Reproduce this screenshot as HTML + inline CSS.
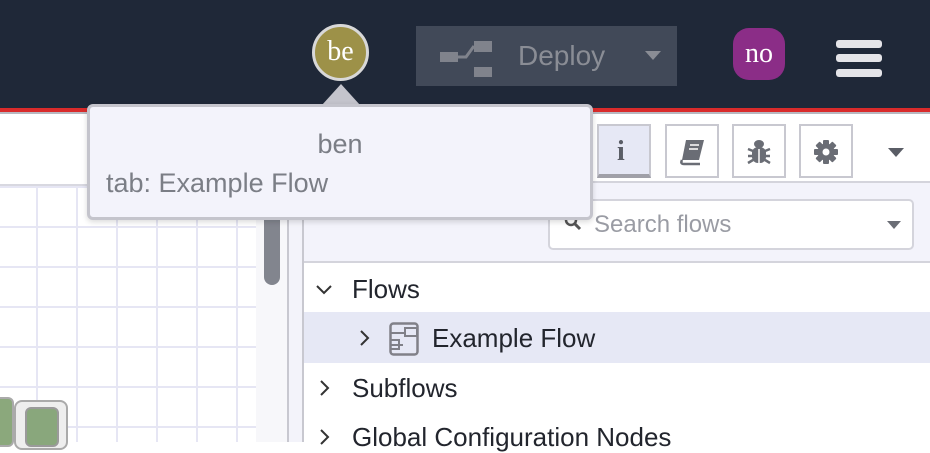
<!DOCTYPE html>
<html><head><style>
body{margin:0;width:930px;height:442px;overflow:hidden;position:relative;font-family:"Liberation Sans",sans-serif;background:#fff}
div{position:absolute;box-sizing:border-box}
.btn{top:124px;width:54px;height:54px;border:2px solid #c8c8d0;background:#fff}
.t{font-size:26px;color:#22252d}
</style></head><body>
<div style="left:0;top:0;width:930px;height:108px;background:#1f2838"></div>
<div style="left:0;top:108px;width:930px;height:4px;background:#d92b2b"></div>
<div style="left:0;top:112px;width:930px;height:2px;background:#b8b8c0"></div>
<div style="left:312px;top:24px;width:57px;height:57px;border-radius:50%;background:#9d9148;border:3px solid #d8d8d8;color:#fff;font-size:28px;text-align:center;line-height:50px;font-family:'Liberation Serif',serif">be</div>
<div style="left:416px;top:26px;width:261px;height:60px;background:#414958"></div>
<svg style="position:absolute;left:436px;top:40px" width="60" height="40"><rect x="4" y="12" width="18" height="10" fill="#80838c"/><path d="M20 17 L30 17 L38 6" stroke="#80838c" stroke-width="3" fill="none"/><rect x="38" y="1" width="18" height="11" fill="#80838c"/><rect x="38" y="27" width="18" height="10" fill="#80838c"/></svg>
<div style="left:518px;top:40px;font-size:28px;color:#8a8d95">Deploy</div>
<div style="left:645px;top:51px;width:0;height:0;border-left:8px solid transparent;border-right:8px solid transparent;border-top:9px solid #8a8d95"></div>
<div style="left:733px;top:28px;width:52px;height:52px;border-radius:16px;background:#8b2d87;color:#fff;font-size:28px;text-align:center;line-height:52px;font-family:'Liberation Serif',serif">no</div>
<div style="left:836px;top:40px;width:46px;height:8px;border-radius:3px;background:#e4e4e8"></div>
<div style="left:836px;top:54px;width:46px;height:8px;border-radius:3px;background:#e4e4e8"></div>
<div style="left:836px;top:69px;width:46px;height:8px;border-radius:3px;background:#e4e4e8"></div>
<div style="left:0;top:184px;width:256px;height:2px;background:#d8d8e0"></div>
<div style="left:0;top:186px;width:256px;height:256px;background-color:#fff;background-image:linear-gradient(to right,#e6e6f4 2px,transparent 2px),linear-gradient(to bottom,#e6e6f4 2px,transparent 2px);background-size:40px 40px;background-position:36px 40px"></div>
<div style="left:256px;top:114px;width:31px;height:328px;background:#f7f7fa"></div>
<div style="left:264px;top:200px;width:16px;height:85px;border-radius:8px;background:#82858e"></div>
<div style="left:287px;top:114px;width:2px;height:328px;background:#c8c8d0"></div>
<div style="left:289px;top:114px;width:13px;height:328px;background:#f3f3fa"></div>
<div style="left:302px;top:114px;width:2px;height:328px;background:#c8c8d0"></div>
<div style="left:-10px;top:397px;width:24px;height:50px;border-radius:6px;background:#8ba87c;border:2px solid #aaa"></div>
<div style="left:14px;top:400px;width:54px;height:50px;border-radius:8px;background:#eee;border:2px solid #aaa"></div>
<div style="left:25px;top:407px;width:34px;height:40px;border-radius:6px;background:#89a77c;border:2px solid #9a9a9a"></div>
<div style="left:304px;top:114px;width:626px;height:70px;background:#fff"></div>
<div style="left:304px;top:181px;width:626px;height:82px;background:#f3f3fb;border-top:2px solid #d4d4dc;border-bottom:2px solid #d4d4dc"></div>
<div class="btn" style="left:597px;background:#e6e8f5;border-bottom:4px solid #a0a0a8"></div>
<div style="left:617px;top:136px;font-size:28px;font-weight:bold;color:#5a5d66;font-family:'Liberation Serif',serif">i</div>
<div class="btn" style="left:665px"></div>
<svg style="position:absolute;left:678px;top:138px" width="30" height="28"><path d="M8 2 H26 L21 22 H4 Z" fill="#6a6d75"/><path d="M4 22 Q2 26 6 26 H22" stroke="#6a6d75" stroke-width="2.5" fill="none"/><path d="M12 7 H21 M11 11 H20" stroke="#fff" stroke-width="1.5"/></svg>
<div class="btn" style="left:732px"></div>
<svg style="position:absolute;left:745px;top:137px" width="28" height="30"><ellipse cx="14" cy="7" rx="5" ry="4" fill="#6a6d75"/><rect x="7" y="10" width="14" height="16" rx="6" fill="#6a6d75"/><path d="M3 12 L8 14 M3 19 H8 M3 26 L8 23 M25 12 L20 14 M25 19 H20 M25 26 L20 23" stroke="#6a6d75" stroke-width="2.5"/><path d="M14 12 V26" stroke="#fff" stroke-width="1.5"/></svg>
<div class="btn" style="left:799px"></div>
<svg style="position:absolute;left:813px;top:139px" width="26" height="26"><g fill="#6a6d75"><circle cx="13" cy="13" r="8.5"/><rect x="10" y="1" width="6" height="24" rx="1"/><rect x="1" y="10" width="24" height="6" rx="1"/><rect x="10" y="1" width="6" height="24" rx="1" transform="rotate(45 13 13)"/><rect x="10" y="1" width="6" height="24" rx="1" transform="rotate(-45 13 13)"/></g><circle cx="13" cy="13" r="3.5" fill="#fff"/></svg>
<div style="left:888px;top:148px;width:0;height:0;border-left:8px solid transparent;border-right:8px solid transparent;border-top:9px solid #5a5d66"></div>
<div style="left:548px;top:199px;width:366px;height:51px;background:#fff;border:2px solid #d4d4dc;border-radius:5px"></div>
<svg style="position:absolute;left:563px;top:212px" width="20" height="20"><circle cx="8" cy="8" r="5" stroke="#555" stroke-width="2.5" fill="none"/><path d="M12 12 L17 17" stroke="#555" stroke-width="3"/></svg>
<div style="left:594px;top:211px;font-size:24px;color:#9a9ca4">Search flows</div>
<div style="left:887px;top:221px;width:0;height:0;border-left:7px solid transparent;border-right:7px solid transparent;border-top:8px solid #6a6d75"></div>
<div style="left:304px;top:312px;width:626px;height:51px;background:#e6e8f5"></div>
<svg style="position:absolute;left:314px;top:280px" width="20" height="20"><path d="M3 6 L10 13 L17 6" stroke="#333" stroke-width="2" fill="none"/></svg>
<div class="t" style="left:352px;top:274px">Flows</div>
<svg style="position:absolute;left:355px;top:328px" width="20" height="20"><path d="M6 3 L13 10 L6 17" stroke="#333" stroke-width="2" fill="none"/></svg>
<svg style="position:absolute;left:389px;top:322px" width="30" height="34"><rect x="1.5" y="1.5" width="27" height="31" rx="3" fill="none" stroke="#808088" stroke-width="2.5"/><path d="M1.5 11 H16 M1.5 23 H14 M16 6 H28 V14 H16 Z M2 18 H10 V27 H2" stroke="#808088" stroke-width="2" fill="none"/></svg>
<div class="t" style="left:432px;top:323px">Example Flow</div>
<svg style="position:absolute;left:315px;top:378px" width="20" height="20"><path d="M6 3 L13 10 L6 17" stroke="#333" stroke-width="2" fill="none"/></svg>
<div class="t" style="left:352px;top:373px">Subflows</div>
<svg style="position:absolute;left:315px;top:427px" width="20" height="20"><path d="M6 3 L13 10 L6 17" stroke="#333" stroke-width="2" fill="none"/></svg>
<div class="t" style="left:352px;top:422px">Global Configuration Nodes</div>
<div style="left:322px;top:84px;width:0;height:0;border-left:19px solid transparent;border-right:19px solid transparent;border-bottom:21px solid #c4c4cc"></div>
<div style="left:87px;top:104px;width:506px;height:116px;background:#f3f3fb;border:3px solid #c4c4cc;border-radius:6px;box-shadow:0 2px 6px rgba(0,0,0,.15)"></div>
<div style="left:87px;top:129px;width:506px;text-align:center;font-size:27px;color:#7b7e86">ben</div>
<div style="left:106px;top:168px;font-size:27px;color:#7b7e86">tab: Example Flow</div>
</body></html>
